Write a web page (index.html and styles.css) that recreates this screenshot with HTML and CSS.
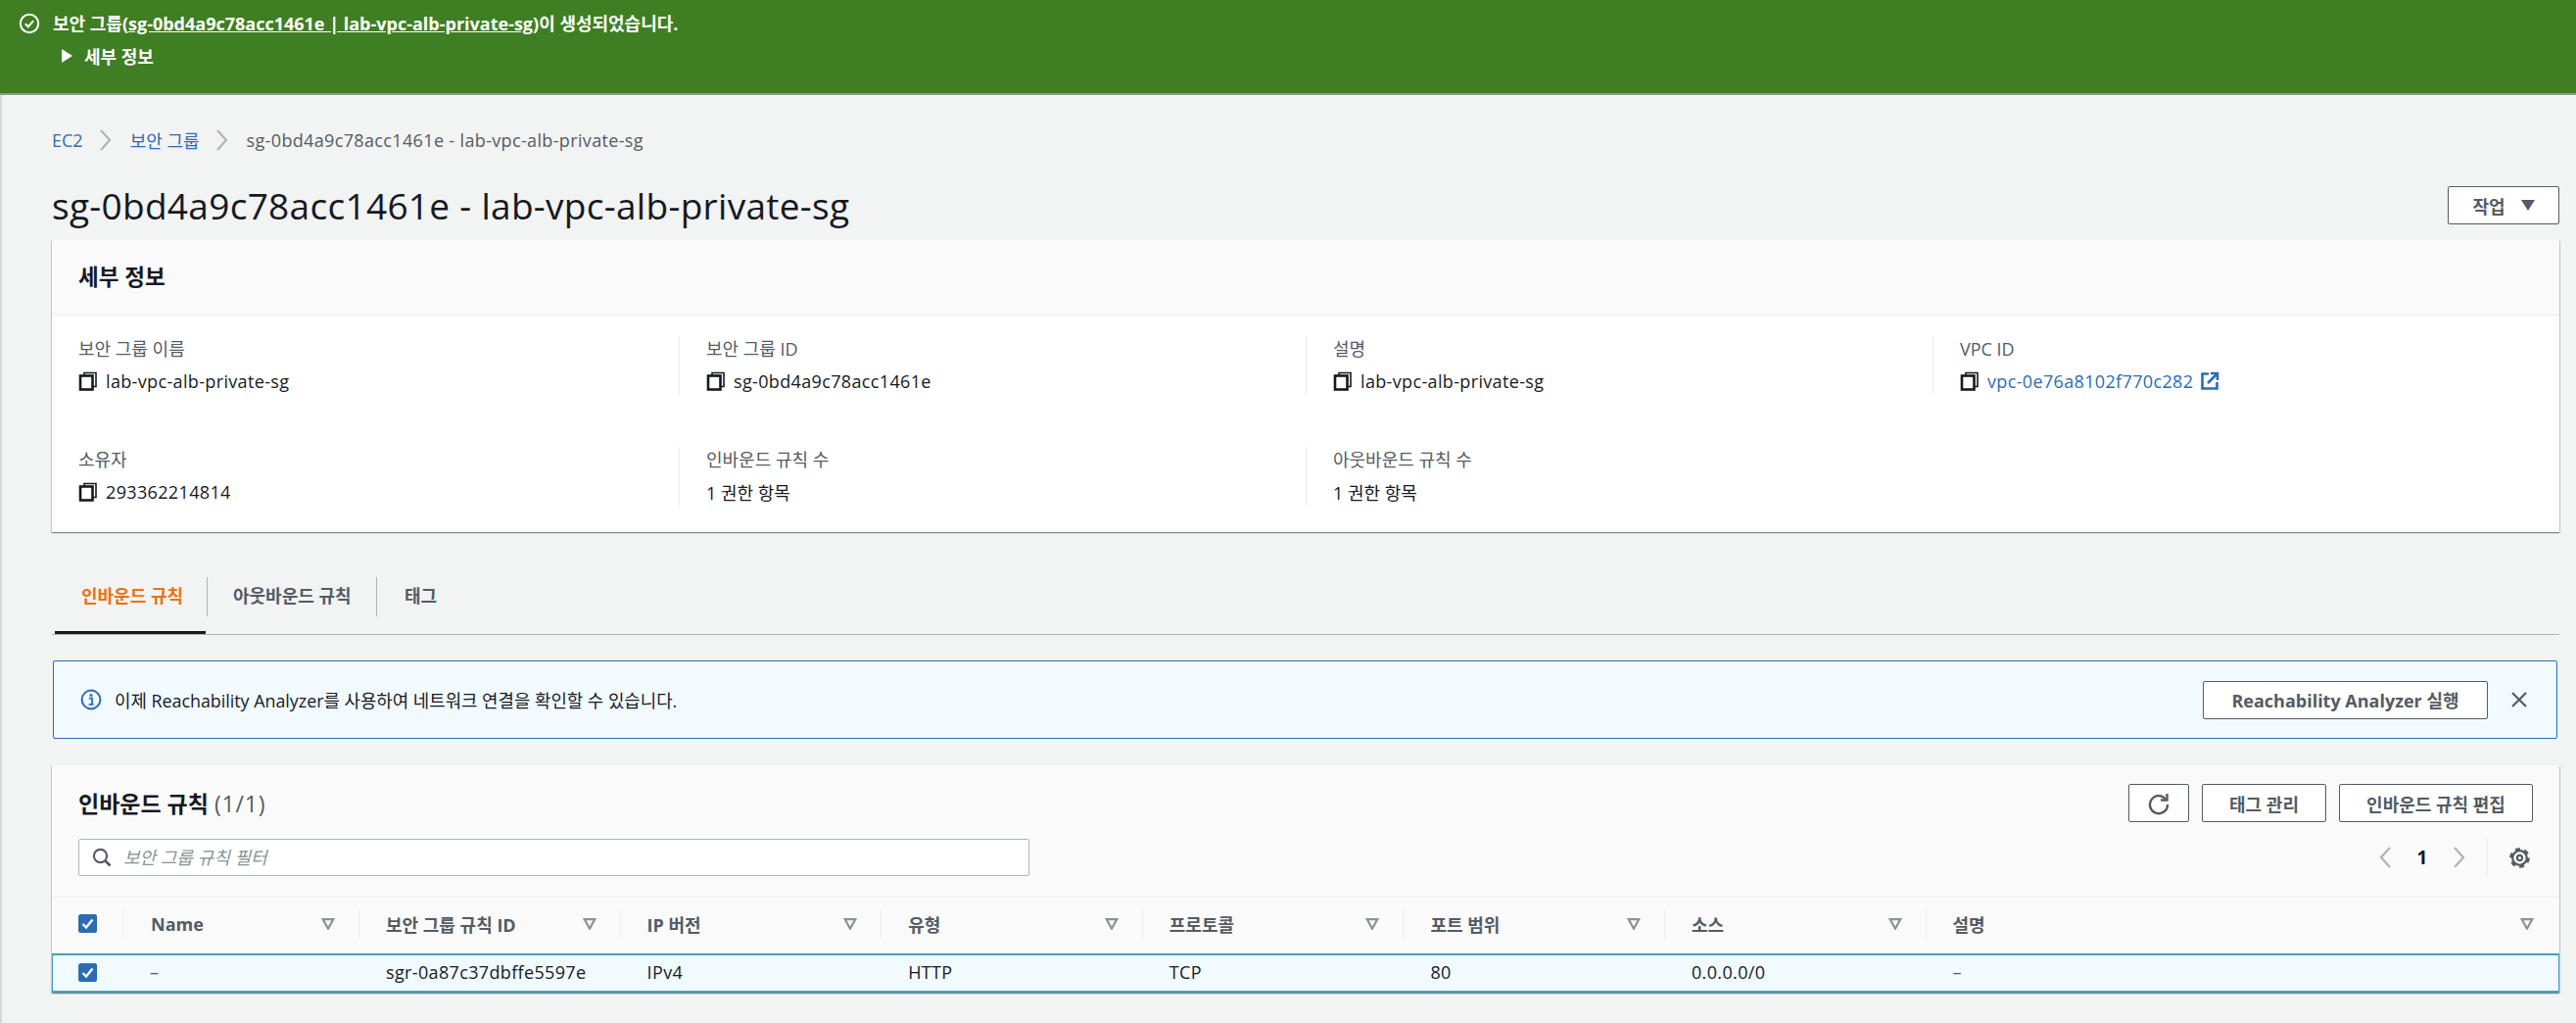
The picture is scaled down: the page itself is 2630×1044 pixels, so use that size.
FILE: index.html
```html
<!DOCTYPE html>
<html lang="ko">
<head>
<meta charset="utf-8">
<title>보안 그룹</title>
<link rel="stylesheet" href="styles.css">
</head>
<body>
<svg class="defs" width="0" height="0" aria-hidden="true">
  <symbol id="copy" viewBox="0 0 20 20"><path d="M6 4V1.5h12v14h-3" fill="none" stroke="currentColor" stroke-width="1.6"/><rect x="2" y="4.5" width="12.5" height="14" fill="none" stroke="currentColor" stroke-width="2.6"/></symbol>
  <symbol id="filter" viewBox="0 0 14 12"><path d="M1.8 1.2h10.4L7 10.8z" fill="none" stroke="currentColor" stroke-width="2.2"/></symbol>
  <symbol id="check" viewBox="0 0 19 19"><rect width="19" height="19" rx="2.5" fill="#2b6cb5"/><path d="M4.5 10l3.5 3.5 6.5-8" fill="none" stroke="#fff" stroke-width="2.4"/></symbol>
  <symbol id="chev" viewBox="0 0 14 24"><path d="M2 2l9 10-9 10" fill="none" stroke="currentColor" stroke-width="2.2"/></symbol>
</svg>

<section class="flash">
  <div class="flash-line">
    <svg class="flash-icon" viewBox="0 0 22 22"><circle cx="11" cy="11" r="9.2" fill="none" stroke="#fff" stroke-width="2"/><path d="M6.8 11.2l3 3 5.4-6" fill="none" stroke="#fff" stroke-width="2"/></svg>
    <span>보안 그룹(<a class="flash-link">sg-0bd4a9c78acc1461e | lab-vpc-alb-private-sg</a>)이 생성되었습니다.</span>
  </div>
  <div class="flash-more"><i class="caret"></i><span>세부 정보</span></div>
</section>

<main class="page">
  <nav class="crumbs">
    <a class="link">EC2</a>
    <svg class="crumb-sep"><use href="#chev"/></svg>
    <a class="link">보안 그룹</a>
    <svg class="crumb-sep"><use href="#chev"/></svg>
    <span class="crumb-now latin">sg-0bd4a9c78acc1461e - lab-vpc-alb-private-sg</span>
  </nav>

  <header class="page-head">
    <h1>sg-0bd4a9c78acc1461e - lab-vpc-alb-private-sg</h1>
    <button class="btn btn-action">작업<i class="down"></i></button>
  </header>

  <section class="card">
    <h2 class="card-title">세부 정보</h2>
    <div class="kv">
      <div class="kv-item"><div class="kv-label">보안 그룹 이름</div><div class="kv-value latin"><svg class="copy"><use href="#copy"/></svg>lab-vpc-alb-private-sg</div></div>
      <div class="kv-item"><div class="kv-label">보안 그룹 ID</div><div class="kv-value latin"><svg class="copy"><use href="#copy"/></svg>sg-0bd4a9c78acc1461e</div></div>
      <div class="kv-item"><div class="kv-label">설명</div><div class="kv-value latin"><svg class="copy"><use href="#copy"/></svg>lab-vpc-alb-private-sg</div></div>
      <div class="kv-item"><div class="kv-label">VPC ID</div><div class="kv-value latin"><svg class="copy"><use href="#copy"/></svg><a class="link">vpc-0e76a8102f770c282</a><svg class="ext" viewBox="0 0 20 20"><path d="M9 2.5H2.5v15h15V11" fill="none" stroke="#2b6cb5" stroke-width="2.6"/><path d="M8 12l9-9M11 2h7v7" fill="none" stroke="#2b6cb5" stroke-width="2.6"/></svg></div></div>
      <div class="kv-item"><div class="kv-label">소유자</div><div class="kv-value latin"><svg class="copy"><use href="#copy"/></svg>293362214814</div></div>
      <div class="kv-item"><div class="kv-label">인바운드 규칙 수</div><div class="kv-value">1 권한 항목</div></div>
      <div class="kv-item"><div class="kv-label">아웃바운드 규칙 수</div><div class="kv-value">1 권한 항목</div></div>
    </div>
  </section>

  <div class="tabs">
    <a class="tab tab-active">인바운드 규칙</a>
    <a class="tab tab-second">아웃바운드 규칙</a>
    <a class="tab tab-third">태그</a>
  </div>

  <section class="alert">
    <svg class="alert-icon" viewBox="0 0 22 22"><circle cx="11" cy="11" r="9.4" fill="none" stroke="#2b6cb5" stroke-width="2"/><circle cx="11" cy="6.6" r="1.5" fill="#2b6cb5"/><path d="M8.8 9.6h3.2v6h1.6M8.6 15.8h5" fill="none" stroke="#2b6cb5" stroke-width="1.8"/></svg>
    <p class="alert-text">이제 Reachability Analyzer를 사용하여 네트워크 연결을 확인할 수 있습니다.</p>
    <button class="btn btn-reach">Reachability Analyzer 실행</button>
    <svg class="close" viewBox="0 0 18 18"><path d="M2 2l14 14M16 2L2 16" fill="none" stroke="#545b64" stroke-width="2.2"/></svg>
  </section>

  <section class="card table-card">
    <div class="table-head">
      <div class="table-row1">
        <h2 class="table-title">인바운드 규칙 <span class="count">(1/1)</span></h2>
        <div class="actions">
          <button class="btn btn-refresh"><svg viewBox="0 0 24 24" class="refresh"><path d="M19 7.5A9 9 0 1 0 21 13" fill="none" stroke="#545b64" stroke-width="2.4"/><path d="M20.5 2v6.5H14" fill="none" stroke="#545b64" stroke-width="2.4"/></svg></button>
          <button class="btn btn-tags">태그 관리</button>
          <button class="btn btn-edit">인바운드 규칙 편집</button>
        </div>
      </div>
      <div class="table-row2">
        <div class="search">
          <svg class="search-icon" viewBox="0 0 20 20"><circle cx="8.5" cy="8.5" r="6.6" fill="none" stroke="#545b64" stroke-width="2.2"/><path d="M13.5 13.5l5 5" stroke="#545b64" stroke-width="2.6"/></svg>
          <span class="placeholder">보안 그룹 규칙 필터</span>
        </div>
        <div class="pager">
          <svg class="pg-chev pg-prev"><use href="#chev"/></svg>
          <span class="pg-num">1</span>
          <svg class="pg-chev"><use href="#chev"/></svg>
          <span class="pg-gear">
            <svg viewBox="0 0 24 24" class="gear"><circle cx="12" cy="12" r="7.6" fill="none" stroke="#545b64" stroke-width="2.4"/><circle cx="12" cy="12" r="9.4" fill="none" stroke="#545b64" stroke-width="2.8" stroke-dasharray="5.2 4.64"/><circle cx="12" cy="12" r="2.7" fill="none" stroke="#545b64" stroke-width="2.2"/></svg>
          </span>
        </div>
      </div>
    </div>

    <div class="grid grid-head">
      <div class="cell-check"><svg class="check"><use href="#check"/></svg></div>
      <div class="th th-name">Name<svg class="filter"><use href="#filter"/></svg></div>
      <div class="th">보안 그룹 규칙 ID<svg class="filter"><use href="#filter"/></svg></div>
      <div class="th">IP 버전<svg class="filter"><use href="#filter"/></svg></div>
      <div class="th">유형<svg class="filter"><use href="#filter"/></svg></div>
      <div class="th">프로토콜<svg class="filter"><use href="#filter"/></svg></div>
      <div class="th">포트 범위<svg class="filter"><use href="#filter"/></svg></div>
      <div class="th">소스<svg class="filter"><use href="#filter"/></svg></div>
      <div class="th th-last">설명<svg class="filter"><use href="#filter"/></svg></div>
    </div>
    <div class="grid grid-row">
      <div class="cell-check"><svg class="check"><use href="#check"/></svg></div>
      <div class="td td-dash td-name">–</div>
      <div class="td">sgr-0a87c37dbffe5597e</div>
      <div class="td">IPv4</div>
      <div class="td">HTTP</div>
      <div class="td">TCP</div>
      <div class="td">80</div>
      <div class="td">0.0.0.0/0</div>
      <div class="td td-dash">–</div>
    </div>
  </section>
</main>
</body>
</html>
```
FILE: styles.css
```css
* { box-sizing: border-box; }
html, body { margin: 0; height: 100%; }
body {
  background: #f2f3f3;
  color: #16191f;
  font-family: "Open Sans", "Noto Sans CJK KR", sans-serif;
  font-size: 18px;
  overflow: hidden;
}
.defs { position: absolute; }
h1, h2, p { margin: 0; font-weight: 400; }
a { color: inherit; }
.link { color: #2b6cb5; }
.latin { letter-spacing: .35px; }

/* flash */
.flash {
  height: 97px;
  background: #3f7e23;
  border-bottom: 2px solid #8a9a88;
  color: #fff;
  font-weight: 700;
  font-size: 18px;
  padding-top: 12px;
}
.flash-line { display: flex; align-items: center; height: 22px; padding-left: 19px; gap: 13px; }
.flash-icon { width: 22px; height: 22px; flex: none; margin-top: 2px; }
.flash-link { text-decoration: underline; }
.flash-more { display: flex; align-items: center; height: 24px; margin-top: 11px; padding-left: 63px; gap: 12px; }
.caret { width: 0; height: 0; border-left: 11px solid #fff; border-top: 7px solid transparent; border-bottom: 7px solid transparent; }

/* page */
.page { border-left: 2px solid #d5dbdb; padding: 34px 17px 0 51px; height: 947px; }
.crumbs { display: flex; align-items: center; height: 24px; gap: 0; color: #545b64; }
.crumb-sep { width: 14px; height: 24px; color: #aab7b8; margin: 0 18px 0 16px; }
.crumb-now { color: #545b64; }
.page-head { display: flex; justify-content: space-between; align-items: center; height: 39px; margin: 35px 0 16px; }
h1 { font-size: 37px; letter-spacing: .3px; line-height: 44px; white-space: nowrap; }

.btn {
  display: inline-flex; align-items: center; justify-content: center;
  height: 39px; padding: 0;
  background: #fff; color: #545b64;
  border: 1px solid #545b64; border-radius: 2px;
  font: 700 18px "Open Sans", "Noto Sans CJK KR", sans-serif;
}
.btn-action { width: 114px; gap: 16px; }
.down { width: 0; height: 0; border-top: 11px solid #545b64; border-left: 7.5px solid transparent; border-right: 7.5px solid transparent; }

/* details */
.card { background: #fff; box-shadow: 0 1px 1px 0 rgba(0,28,36,.3), 1px 1px 1px 0 rgba(0,28,36,.15), -1px 1px 1px 0 rgba(0,28,36,.15); }
.card-title { height: 77px; padding: 23px 27px 0; background: #fafafa; border-bottom: 1px solid #eaeded; font-size: 22.5px; line-height: 30px; font-weight: 700; }
.kv { display: grid; grid-template-columns: repeat(4, 640px); row-gap: 53px; padding: 21px 0 27px; }
.kv-item { height: 60px; padding: 1px 0 0 27px; border-left: 1px solid #eaeded; }
.kv-item:nth-child(4n+1) { border-left: 0; }
.kv-label { height: 24px; line-height: 24px; color: #545b64; }
.kv-value { display: flex; align-items: center; height: 24px; margin-top: 9px; }
.copy { width: 20px; height: 20px; margin-right: 8px; flex: none; color: #16191f; }
.ext { width: 20px; height: 20px; margin-left: 7px; }

/* tabs */
.tabs { display: flex; height: 59px; margin-top: 46px; border-bottom: 1px solid #aab7b8; }
.tab { height: 58px; padding-top: 7px; font-weight: 700; color: #545b64; white-space: nowrap; line-height: 24px; position: relative; }
.tab-active { width: 154px; padding-left: 27px; color: #ec7211; border-bottom: 3px solid #16191f; margin-left: 3px; }
.tab-second { width: 173px; margin-left: 1px; padding-left: 27px; }
.tab-third { padding-left: 29px; }
.tab-second::before, .tab-third::before { content: ""; position: absolute; left: 0; top: 0; height: 40px; border-left: 1px solid #aab7b8; }

/* alert */
.alert {
  display: flex; align-items: center;
  height: 80px; margin: 26px 0 0 1px; width: 2557px;
  padding: 0 29px 0 27px;
  background: #f1faff; border: 1px solid #2b6cb5; border-radius: 2px;
}
.alert-icon { width: 22px; height: 22px; flex: none; margin-right: 13px; }
.alert-text { flex: 1; font-size: 17.85px; }
.btn-reach { width: 291px; }
.close { width: 18px; height: 18px; margin-left: 23px; }

/* table */
.table-card { margin-top: 27px; background: #fafafa; height: 232px; }
.table-head { height: 135px; padding: 19px 27px 0; border-bottom: 1px solid #eaeded; }
.table-row1, .table-row2 { display: flex; justify-content: space-between; align-items: center; }
.table-row1 { height: 39px; }
.table-row2 { height: 38px; margin-top: 17px; }
.table-title { font-size: 23px; font-weight: 700; line-height: 30px; }
.count { font-weight: 400; color: #545b64; letter-spacing: .8px; }
.actions { display: flex; gap: 13px; }
.btn-refresh { width: 62px; }
.refresh { width: 24px; height: 24px; }
.btn-tags { width: 127px; }
.btn-edit { width: 198px; }
.search { display: flex; align-items: center; width: 971px; height: 38px; background: #fff; border: 1px solid #aab7b8; border-radius: 2px; padding-left: 13px; }
.search-icon { width: 20px; height: 20px; margin-right: 12px; }
.placeholder { font-style: italic; color: #879596; margin-top: -2px; }
.pager { display: flex; align-items: center; height: 40px; color: #aab7b8; }
.pg-chev { width: 14px; height: 24px; }
.pg-prev { transform: scaleX(-1); }
.pg-num { width: 62px; text-align: center; color: #16191f; font-weight: 700; font-size: 19px; }
.pg-gear { display: flex; align-items: center; height: 40px; margin-left: 21px; padding: 0 2px 0 21px; border-left: 1px solid #eaeded; }
.gear { width: 23px; height: 23px; }

.grid { display: grid; grid-template-columns: 72px 241px repeat(6, 266.6px) 1fr; align-items: center; }
.grid-head { height: 57px; border-bottom: 1px solid #eaeded; padding-bottom: 2px; }
.grid-row { height: 40px; background: #f1faff; border-top: 2px solid #44a0c8; border-bottom: 2px solid #44a0c8; box-shadow: inset 1px 0 #44a0c8, inset -1px 0 #44a0c8; padding-bottom: 2px; }
.cell-check { padding-left: 27px; display: flex; }
.grid-head .cell-check { margin-top: -2px; }
.check { width: 19px; height: 19px; }
.th { display: flex; justify-content: space-between; align-items: center; height: 28px; padding: 0 24px 0 27px; border-left: 1px solid #eaeded; font-weight: 700; color: #545b64; white-space: nowrap; }
.th-name { padding-left: 28px; }
.th-last { padding-right: 26px; }
.td { padding-left: 28px; white-space: nowrap; letter-spacing: .35px; }
.td-name { padding-left: 28px; }
.td-dash { color: #545b64; }
.filter { width: 14px; height: 12px; color: #879596; flex: none; }
```
